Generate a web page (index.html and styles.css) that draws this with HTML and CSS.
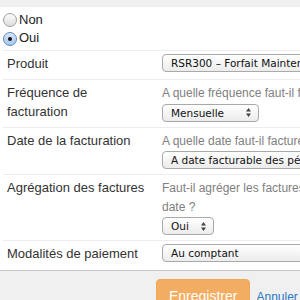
FILE: index.html
```html
<!doctype html>
<html>
	<head>
		<meta charset="utf-8">
		<title>Facturation</title>
		<link rel="stylesheet" href="styles.css">
	</head>
	<body>
		<div class="panel">
			<div class="choices">
				<label class="radio"><span class="knob"></span>Non</label>
				<label class="radio"><span class="knob on"></span>Oui</label>
			</div>
			<table class="form">
				<tr>
					<th>Produit</th>
					<td class="solo">
						<span class="select wide">RSR300 &ndash; Forfait Maintenance annuelle</span>
					</td>
				</tr>
				<tr>
					<th>Fréquence de facturation</th>
					<td>
						<div class="help">A quelle fréquence faut-il facturer ?</div>
						<span class="select mid">Mensuelle
							<svg class="arrows" width="5" height="9" viewBox="0 0 5 9"><path d="M0 3.6L2.5 0L5 3.6Z M0 5.4L5 5.4L2.5 9Z"/></svg>
						</span>
					</td>
				</tr>
				<tr>
					<th>Date de la facturation</th>
					<td>
						<div class="help">A quelle date faut-il facturer ?</div>
						<span class="select wide">A date facturable des périodes</span>
					</td>
				</tr>
				<tr>
					<th>Agrégation des factures</th>
					<td>
						<div class="help">Faut-il agréger les factures ayant la même<br>date ?</div>
						<span class="select small">Oui
							<svg class="arrows" width="5" height="9" viewBox="0 0 5 9"><path d="M0 3.6L2.5 0L5 3.6Z M0 5.4L5 5.4L2.5 9Z"/></svg>
						</span>
					</td>
				</tr>
				<tr>
					<th>Modalités de paiement</th>
					<td class="solo">
						<span class="select wide">Au comptant</span>
					</td>
				</tr>
			</table>
		</div>
		<div class="actions">
			<button class="btn">Enregistrer</button>
			<a href="#" class="cancel">Annuler</a>
		</div>
	</body>
</html>
```
FILE: styles.css
```css
html, body {
	overflow: hidden;
}

body {
	margin: 0;
	background: #f0f0f0;
	color: #333;
	font-size: 13px;
	line-height: 1.42857;
	font-family: "Liberation Sans", Arial, Helvetica, sans-serif;
}

.panel {
	margin-top: 7px;
	padding: 4px 0 1px 3px;
	background: white;
	border-bottom: 1px solid #c6c6c6;
}

.choices {
	padding-bottom: 2px;
}

.radio {
	display: flex;
	align-items: center;
	height: 18.5px;
	color: #222;
}

.knob {
	width: 14px;
	height: 14px;
	margin-right: 2px;
	box-sizing: border-box;
	border: 1px solid #a0a0a0;
	border-radius: 50%;
	background: linear-gradient(#fcfcfc, #dedede);
	display: flex;
	align-items: center;
	justify-content: center;
}

.knob.on {
	border-color: #5c87c2;
	background: linear-gradient(#d7e6f8, #a9c7ee);
}

.knob.on::after {
	content: "";
	width: 4px;
	height: 4px;
	border-radius: 50%;
	background: #111;
}

.form {
	width: 560px;
	table-layout: fixed;
	border-collapse: separate;
	border-spacing: 0;
}

.form th, .form td {
	padding: 4px;
	vertical-align: top;
	text-align: left;
	border-top: 1px solid #ececec;
}

.form th {
	width: 140px;
	padding-right: 11px;
	font-weight: normal;
	color: #333;
}

.help {
	color: #808080;
	font-size: 12px;
	line-height: 18.57px;
	white-space: nowrap;
}

.select {
	display: flex;
	align-items: center;
	justify-content: space-between;
	box-sizing: border-box;
	height: 18px;
	margin: 1px 0;
	padding: 0 7px 0 8px;
	border: 1px solid #a9a9a9;
	border-radius: 4px;
	background: linear-gradient(#ffffff, #ececec);
	color: #111;
	font-family: "DejaVu Sans", Verdana, sans-serif;
	font-size: 10.5px;
	line-height: 16px;
	white-space: nowrap;
	overflow: hidden;
}

.solo .select {
	margin: -1px 0 3px 0;
}

.select.wide {
	width: 400px;
}

.select.mid {
	width: 97px;
}

.select.small {
	width: 52px;
}

.arrows {
	fill: #444;
	flex: none;
}

.actions {
	display: flex;
	align-items: baseline;
	gap: 6px;
	padding: 8px 0 0 156px;
}

.btn {
	padding: 6px 12px;
	border: 1px solid #efa85a;
	border-radius: 4px;
	background: #f2ad62;
	color: white;
	font-family: "Liberation Sans", Arial, Helvetica, sans-serif;
	font-size: 14px;
	line-height: 20px;
}

.cancel {
	color: #2a78c2;
	text-decoration: none;
	font-size: 12px;
}
```
